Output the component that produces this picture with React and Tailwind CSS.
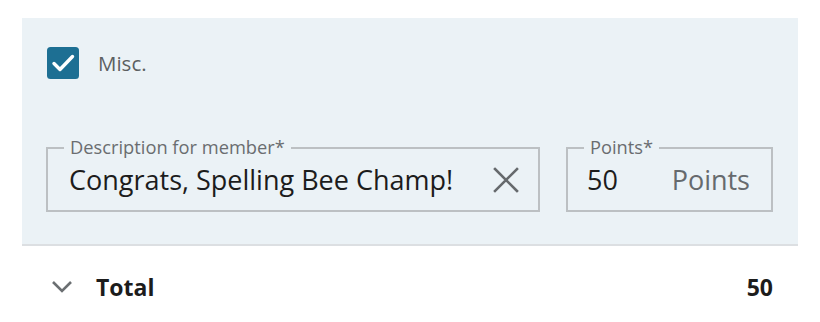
import { useState } from "react";

const font = { fontFamily: "'Open Sans', 'Liberation Sans', sans-serif" };

function CheckIcon() {
  return (
    <svg width="32" height="32" viewBox="0 0 32 32" className="block">
      <rect x="0" y="0" width="32" height="32" rx="3.5" fill="#1d6f93" />
      <path d="M7 16.5 L13 22.5 L25.5 9.5" fill="none" stroke="#ffffff" strokeWidth="3.4" strokeLinecap="round" strokeLinejoin="round" />
    </svg>
  );
}

function ClearIcon() {
  return (
    <svg width="26" height="26" viewBox="0 0 26 26" className="block">
      <path d="M2 2 L24 24 M24 2 L2 24" stroke="#666a6d" strokeWidth="2.6" strokeLinecap="square" />
    </svg>
  );
}

function Chevron() {
  return (
    <svg width="22" height="14" viewBox="0 0 22 14" className="block">
      <path d="M2 2 L11 11 L20 2" fill="none" stroke="#6b6f72" strokeWidth="2.6" />
    </svg>
  );
}

export default function App() {
  const [desc, setDesc] = useState("Congrats, Spelling Bee Champ!");
  const [checked, setChecked] = useState(true);

  return (
    <div className="h-[322px] w-[820px] bg-white pt-[18px]" style={font}>
      <section className="mx-[22px] border-b-2 border-[#dcdfe2] bg-[#ebf2f6] px-[24px] pb-[32px] pt-[29px]">
        <label className="flex items-center gap-[19px] pl-px" onClick={() => setChecked(!checked)}>
          {checked ? <CheckIcon /> : <span className="block h-[32px] w-[32px] rounded border-2 border-[#1d6f93]" />}
          <span className="text-[20.5px] text-[#5c5f61]">Misc.</span>
        </label>

        <div className="mt-[68px] flex gap-[26px]">
          <div className="relative flex h-[65px] w-[494px] items-center justify-between border-2 border-[#bcc0c3] pl-[21px] pr-[19px]">
            <span className="absolute -top-[13px] left-[16px] bg-[#ebf2f6] px-[6px] text-[18.3px] leading-[22px] text-[#6a6d70]">
              Description for member*
            </span>
            <span className="pt-[1px] text-[27px] leading-[34px] text-[#1c1c1c]">{desc}</span>
            <button onClick={() => setDesc("")}>
              <ClearIcon />
            </button>
          </div>

          <div className="relative flex h-[65px] w-[207px] items-center justify-between border-2 border-[#bcc0c3] pl-[19px] pr-[21px]">
            <span className="absolute -top-[13px] left-[16px] bg-[#ebf2f6] px-[6px] text-[18.3px] leading-[22px] text-[#6a6d70]">
              Points*
            </span>
            <span className="pt-[1px] text-[27px] leading-[34px] text-[#1c1c1c]">50</span>
            <span className="pt-[1px] text-[27px] leading-[34px] text-[#666a6d]">Points</span>
          </div>
        </div>
      </section>

      <div className="mx-[22px] flex items-center justify-between pl-[29px] pr-[25px] pt-[24px]">
        <div className="flex items-center gap-[23px]">
          <Chevron />
          <span className="text-[23px] font-bold text-[#1c1c1c]">Total</span>
        </div>
        <span className="text-[23px] font-bold text-[#1c1c1c]">50</span>
      </div>
    </div>
  );
}
